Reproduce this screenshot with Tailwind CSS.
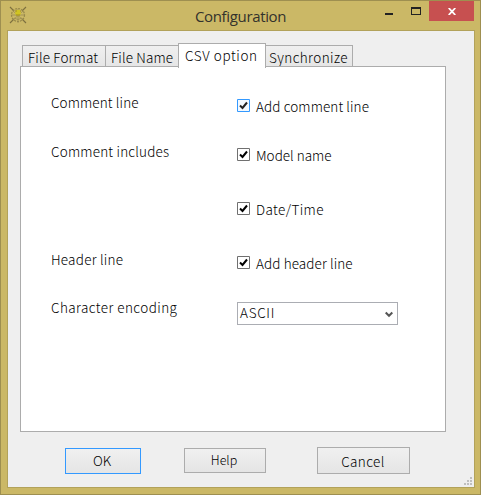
<!DOCTYPE html>
<html lang="en">
<head>
<meta charset="utf-8">
<title>Configuration</title>
<script src="https://cdn.jsdelivr.net/npm/@tailwindcss/browser@4"></script>
</head>
<body class="overflow-hidden">
<div class="w-[481px] h-[495px] bg-[#cbb866] border border-[#9e8f50] flex flex-col font-['Noto_Sans_CJK_JP',sans-serif] font-light text-[13.5px] leading-[16px] text-black whitespace-nowrap">
  <header class="h-[29px] shrink-0 flex items-start">
    <svg class="ml-[8px] mt-[5px] w-[18px] h-[18px] shrink-0" viewBox="0 0 18 18" fill="none">
      <path d="M1 1l4 4M17 1l-4 4M1 17l4-4M17 17l-4-4" stroke="#7d7040" stroke-width="1.1"/>
      <circle cx="9" cy="9" r="6.5" stroke="#968749" stroke-width="1.2" stroke-dasharray="2 1"/>
      <path d="M2 9h14M9 3v14M4 5l10 9M14 5l-10 9M5 12q4 3 8 0" stroke="#9b8c50" stroke-width=".8"/>
      <path d="M7 4h4l1 4-3 2-3-2z" fill="#d0c422"/>
      <path d="M6 5h2M11 5h1M7 9h4" stroke="#a08c20"/>
    </svg>
    <h1 class="ml-[168px] mt-[5px] w-[100px] font-['Open_Sans',sans-serif] font-normal text-[15px] leading-[20px] tracking-[-0.35px] text-[#33322c]">Configuration</h1>
    <div class="ml-auto mr-[6px] flex items-start">
      <i class="block w-[8px] h-[2px] mt-[12px] bg-[#222]"></i>
      <i class="block w-[10px] h-[8px] mt-[6px] ml-[18px] border border-t-2 border-[#222]"></i>
      <div class="ml-[8px] w-[45px] h-[20px] bg-[#c75050] flex items-center justify-center">
        <svg class="w-[8px] h-[7px] mt-[1px]" viewBox="0 0 8 7"><path d="M.7 0l6.6 7M7.3 0l-6.6 7" stroke="#fff" stroke-width="1.8"/></svg>
      </div>
    </div>
  </header>
  <main class="ml-[6px] w-[468px] h-[458px] border border-[#b2a25a] bg-[#efefef] relative flex flex-col">
    <nav class="flex items-end h-[36px] pl-[14px] shrink-0">
      <div class="w-[84px] h-[22px] border border-b-0 border-[#acacac] bg-linear-to-b from-[#f0f0f0] to-[#e5e5e5] pl-[5px] pt-[3px] tracking-[0.15px]">File Format</div>
      <div class="w-[74px] h-[22px] border border-b-0 border-l-0 border-[#acacac] bg-linear-to-b from-[#f0f0f0] to-[#e5e5e5] pl-[5px] pt-[3px] tracking-[0.15px]">File Name</div>
      <div class="w-[88px] h-[25px] -ml-[2px] -mb-[1px] z-10 border border-b-0 border-[#acacac] bg-white pl-[6px] pt-[3px] tracking-[0.6px]">CSV option</div>
      <div class="w-[87px] h-[22px] border border-b-0 border-l-0 border-[#acacac] bg-linear-to-b from-[#f0f0f0] to-[#e5e5e5] pl-[3px] pt-[3px] tracking-[0.4px]">Synchronize</div>
    </nav>
    <section class="ml-[12px] -mt-px w-[426px] h-[366px] shrink-0 border border-[#acacac] bg-white pt-[27px] pl-[30px] grid grid-cols-[186px_161px] grid-rows-[49px_54px_54px_48px_26px] content-start">
      <div class="tracking-[0.12px]">Comment line</div>
      <label class="pt-[4px] flex gap-[6px] tracking-[0.1px]"><svg class="w-[13px] h-[13px] mt-px" viewBox="0 0 13 13"><path d="M.5.5h12v12H.5z" fill="#f3f9ff" stroke="#3399ff"/><path d="M3 6.5l2.5 2.5L10 3.5" fill="none" stroke="#222" stroke-width="2"/></svg>Add comment line</label>
      <div class="tracking-[0.2px]">Comment includes</div>
      <label class="pt-[4px] flex gap-[6px]"><svg class="w-[13px] h-[13px] mt-px" viewBox="0 0 13 13"><path d="M.5.5h12v12H.5z" fill="#fff" stroke="#707070"/><path d="M3 6.5l2.5 2.5L10 3.5" fill="none" stroke="#000" stroke-width="2"/></svg>Model name</label>
      <div></div>
      <label class="pt-[4px] flex gap-[6px] tracking-[0.4px]"><svg class="w-[13px] h-[13px] mt-px" viewBox="0 0 13 13"><path d="M.5.5h12v12H.5z" fill="#fff" stroke="#707070"/><path d="M3 6.5l2.5 2.5L10 3.5" fill="none" stroke="#000" stroke-width="2"/></svg>Date/Time</label>
      <div class="tracking-[0.25px]">Header line</div>
      <label class="pt-[4px] flex gap-[6px] tracking-[0.1px]"><svg class="w-[13px] h-[13px] mt-px" viewBox="0 0 13 13"><path d="M.5.5h12v12H.5z" fill="#fff" stroke="#707070"/><path d="M3 6.5l2.5 2.5L10 3.5" fill="none" stroke="#000" stroke-width="2"/></svg>Add header line</label>
      <div class="tracking-[0.43px]">Character encoding</div>
      <div class="mt-[3px] h-[23px] border border-[#abadb3] flex items-center justify-between pl-[2px] pr-[4px]"><span class="-mt-[3px] tracking-[0.7px]">ASCII</span><svg class="w-[8px] h-[7px] mt-px" viewBox="0 0 8 7"><path d="M.7 1.5L4 4.8l3.3-3.3" fill="none" stroke="#555" stroke-width="2"/></svg></div>
    </section>
    <footer class="flex pl-[57px] pt-[15px]">
      <button class="mt-px w-[76px] h-[26px] border border-[#3399ff] bg-linear-to-b from-[#f0f0f0] to-[#e5e5e5] pb-[2px] pr-[2px]">OK</button>
      <button class="mt-px ml-[43px] w-[82px] h-[25px] border border-[#acacac] bg-linear-to-b from-[#f0f0f0] to-[#e5e5e5] pb-[2px] pr-[2px] text-[12.5px]">Help</button>
      <button class="ml-[51px] w-[93px] h-[27px] border border-[#acacac] bg-linear-to-b from-[#f0f0f0] to-[#e5e5e5] pr-[1px] tracking-[0.4px]">Cancel</button>
    </footer>
    <svg class="absolute right-[2px] bottom-[2px] w-[8px] h-[8px]" viewBox="0 0 8 8" fill="#bfbfbf"><path d="M6 0h2v2H6zM3 3h2v2H3zM6 3h2v2H6zM0 6h2v2H0zM3 6h2v2H3zM6 6h2v2H6z"/></svg>
  </main>
</div>
</body>
</html>
